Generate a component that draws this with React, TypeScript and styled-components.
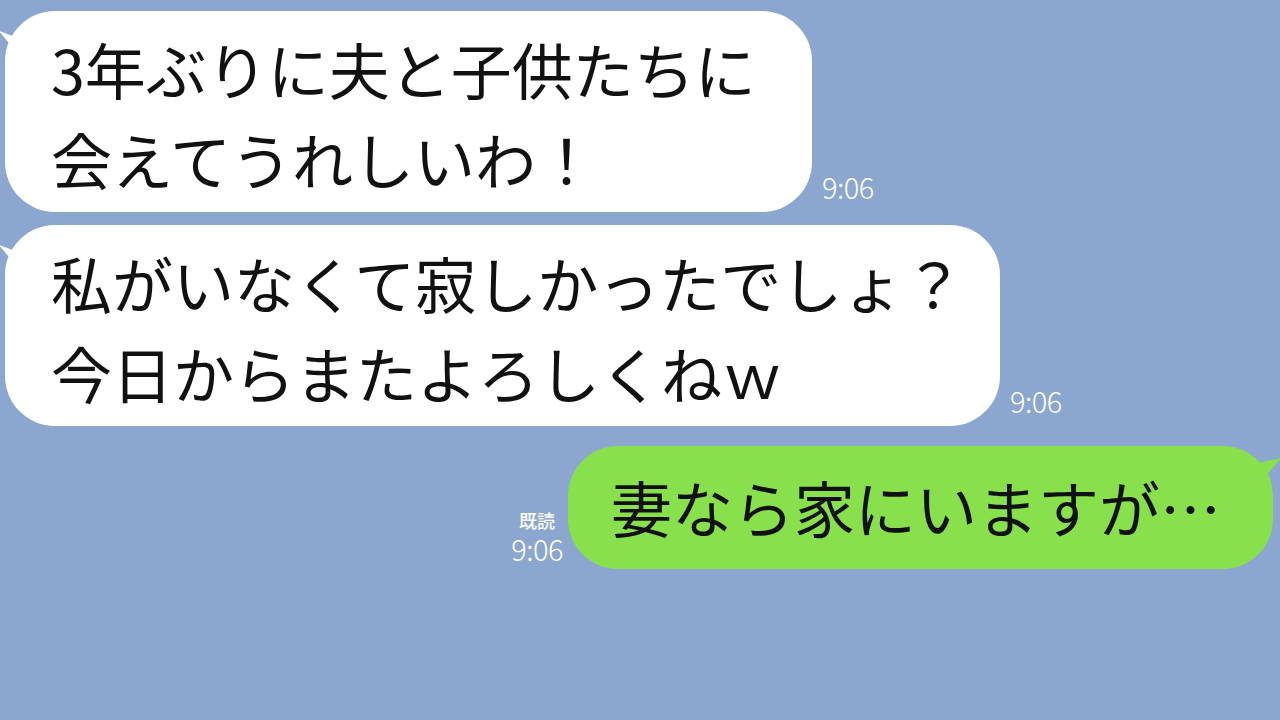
import React from 'react'
import styled, { createGlobalStyle } from 'styled-components'

const GlobalStyle = createGlobalStyle`
  html, body {
    margin: 0;
    padding: 0;
    background: #8ca7cf;
  }
  body {
    font-family: "Noto Sans CJK JP", "Noto Sans", sans-serif;
  }
`

const Screen = styled('div')`
  width: 1280px;
  height: 720px;
  overflow: hidden;
  background: #8ca7cf;
  display: flex;
  flex-direction: column;
  gap: 13px;
  padding-top: 11px;
  box-sizing: border-box;
`

const Row = styled('div')<{ $mine?: boolean }>`
  display: flex;
  align-items: flex-end;
  flex-direction: ${(p) => (p.$mine ? 'row-reverse' : 'row')};
  gap: ${(p) => (p.$mine ? '5px' : '10px')};
  padding: ${(p) => (p.$mine ? '7px 7px 0 0' : '0 0 0 5px')};
`

const Bubble = styled('div')<{ $mine?: boolean; $w: number }>`
  position: relative;
  box-sizing: border-box;
  width: ${(p) => p.$w}px;
  background: ${(p) => (p.$mine ? '#88e04c' : '#ffffff')};
  color: #111;
  font-size: 61px;
  line-height: 90px;
  border-radius: 50px;
  white-space: pre;
  padding: ${(p) => (p.$mine ? '16px 0 17px 43px' : '13px 0 8px 46px')};

  &::before {
    content: '';
    position: absolute;
    top: ${(p) => (p.$mine ? '12px' : '20px')};
    ${(p) => (p.$mine ? 'right: -8px;' : 'left: -6px;')}
    width: 22px;
    height: 16px;
    background: inherit;
    clip-path: ${(p) =>
      p.$mine
        ? 'polygon(0 30%, 100% 0, 40% 100%)'
        : 'polygon(0 0, 80% 40%, 60% 100%)'};
  }
`

const Meta = styled('div')<{ $mine?: boolean }>`
  display: flex;
  flex-direction: column;
  align-items: center;
  gap: 2px;
  color: #ffffff;
  margin-bottom: ${(p) => (p.$mine ? '5px' : '10px')};
`

const Read = styled('span')`
  font-size: 18px;
  line-height: 20px;
  font-weight: 500;
`

const Time = styled('span')`
  font-size: 29px;
  line-height: 32px;
  font-weight: 300;
  letter-spacing: -0.5px;
`

const messages = [
  { text: '3年ぶりに夫と子供たちに\n会えてうれしいわ！', mine: false, w: 807 },
  { text: '私がいなくて寂しかったでしょ？\n今日からまたよろしくねｗ', mine: false, w: 995 },
  { text: '妻なら家にいますが…', mine: true, w: 705 },
]

const App: React.FC = () => (
  <React.Fragment>
    <GlobalStyle />
    <Screen>
      {messages.map((m, i) => (
        <Row key={i} $mine={m.mine}>
          <Bubble $mine={m.mine} $w={m.w}>
            {m.text}
          </Bubble>
          <Meta $mine={m.mine}>
            {m.mine && <Read>既読</Read>}
            <Time>9:06</Time>
          </Meta>
        </Row>
      ))}
    </Screen>
  </React.Fragment>
)

export default App
